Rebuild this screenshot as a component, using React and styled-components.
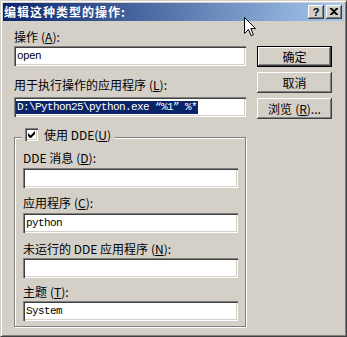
import React from "react";
import styled, { createGlobalStyle } from "styled-components";

const Global = createGlobalStyle`
  html, body { margin: 0; padding: 0; background: #d4d0c8; }
  * { box-sizing: border-box; }
`;

const CJK = `"Noto Sans CJK SC", "Noto Sans", sans-serif`;
const MONO = `"Liberation Mono", "Noto Sans CJK SC", monospace`;

const Window = styled.div`
  position: relative;
  width: 347px;
  height: 337px;
  background: #d4d0c8;
  border: 1px solid;
  border-color: #d4d0c8 #404040 #404040 #d4d0c8;
  box-shadow: inset 1px 1px 0 #ffffff, inset -1px -1px 0 #808080;
  padding: 2px;
  display: flex;
  flex-direction: column;
  overflow: hidden;
`;

const TitleBar = styled.div`
  height: 18px;
  display: flex;
  align-items: center;
  padding: 0 2px 0 1px;
  background: linear-gradient(to right, #0a246a, #a6caf0);
`;

const Title = styled.div`
  flex: 1;
  color: #ffffff;
  font: bold 12px/14px ${CJK};
  letter-spacing: 1px;
  white-space: nowrap;
`;

const CaptionButton = styled.div`
  width: 16px;
  height: 14px;
  margin-left: ${(p) => p.$ml || 0}px;
  background: #d4d0c8;
  box-shadow: inset -1px -1px 0 #404040, inset 1px 1px 0 #ffffff,
    inset -2px -2px 0 #808080, inset 2px 2px 0 #d4d0c8;
  display: flex;
  align-items: center;
  justify-content: center;
  font: bold 11px/14px "Liberation Sans", sans-serif;
  color: #000;
  padding-bottom: 1px;
`;

const Body = styled.div`
  display: flex;
  padding: 9px 0 0 11px;
`;

const LeftCol = styled.div`
  width: 234px;
  display: flex;
  flex-direction: column;
`;

const RightCol = styled.div`
  margin-left: 9px;
  padding-top: 16px;
  display: flex;
  flex-direction: column;
  gap: 5px;
`;

const Key = styled.span`
  padding-left: ${(p) => (p.$tight ? 0 : 3)}px;
  u { text-decoration: underline; text-underline-offset: 1px; }
`;

const Label = styled.div`
  font: 12px/13px ${CJK};
  color: #000;
  white-space: nowrap;
  margin-top: ${(p) => p.$mt || 0}px;
  margin-bottom: ${(p) => p.$mb || 3}px;
`;

const TextBox = styled.div`
  width: ${(p) => p.$w}px;
  height: 20px;
  background: #ffffff;
  box-shadow: inset 1px 1px 0 #808080, inset 2px 2px 0 #404040,
    inset -1px -1px 0 #ffffff, inset -2px -2px 0 #d4d0c8;
  padding: 0 2px;
  display: flex;
  align-items: center;
  font: 11px/13px ${MONO};
  letter-spacing: -0.6px;
  color: #000;
  white-space: pre;
  overflow: hidden;
`;

const Value = styled.span`
  padding: 0 1px;
  height: 13px;
  line-height: 13px;
  background: ${(p) => (p.$selected ? "#0a246a" : "transparent")};
  color: ${(p) => (p.$selected ? "#ffffff" : "#000000")};
`;

const Button = styled.div`
  width: 75px;
  height: 21px;
  background: #d4d0c8;
  display: flex;
  align-items: center;
  justify-content: center;
  font: 12px/13px ${CJK};
  color: #000;
  border: ${(p) => (p.$default ? "1px solid #000" : "none")};
  box-shadow: ${(p) =>
    p.$default
      ? "inset -1px -1px 0 #404040, inset 1px 1px 0 #ffffff, inset -2px -2px 0 #808080"
      : "inset -1px -1px 0 #404040, inset 1px 1px 0 #ffffff, inset -2px -2px 0 #808080, inset 2px 2px 0 #d4d0c8"};
`;

const GroupBox = styled.div`
  position: relative;
  margin-top: 20px;
  width: 232px;
  height: 190px;
  border: 1px solid #808080;
  box-shadow: inset 1px 1px 0 #ffffff, 1px 1px 0 #ffffff;
  padding: 13px 0 0 8px;
  display: flex;
  flex-direction: column;
`;

const Legend = styled.div`
  position: absolute;
  top: -10px;
  left: 7px;
  width: 93px;
  height: 13px;
  padding-left: 3px;
  background: #d4d0c8;
  display: flex;
  align-items: center;
  gap: 6px;
  font: 12px/13px ${CJK};
  color: #000;
  white-space: nowrap;
`;

const CheckBox = styled.div`
  width: 13px;
  height: 13px;
  flex: none;
  background: #ffffff;
  box-shadow: inset 1px 1px 0 #808080, inset 2px 2px 0 #404040,
    inset -1px -1px 0 #ffffff, inset -2px -2px 0 #d4d0c8;
  display: flex;
  align-items: center;
  justify-content: center;
`;

const Cursor = styled.svg`
  position: absolute;
  left: 243px;
  top: 16px;
`;

export default function App() {
  return (
    <>
      <Global />
      <Window>
        <TitleBar>
          <Title>编辑这种类型的操作:</Title>
          <CaptionButton>?</CaptionButton>
          <CaptionButton $ml={2}>
            <svg width="8" height="7" viewBox="0 0 8 7">
              <path d="M0 0h2l2 2 2-2h2v1L5 3.5 8 6v1H6L4 5 2 7H0V6l3-2.5L0 1z" fill="#000" />
            </svg>
          </CaptionButton>
        </TitleBar>
        <Body>
          <LeftCol>
            <Label>
              操作<Key>(<u>A</u>):</Key>
            </Label>
            <TextBox $w={232}>
              <Value>open</Value>
            </TextBox>
            <Label $mt={12} $mb={6}>
              用于执行操作的应用程序<Key>(<u>L</u>):</Key>
            </Label>
            <TextBox $w={232}>
              <Value $selected>D:\Python25\python.exe “%1” %*</Value>
            </TextBox>
            <GroupBox>
              <Legend>
                <CheckBox>
                  <svg width="7" height="7" viewBox="0 0 7 7">
                    <path d="M0 2v3l2 2h1l4-4V0L2.5 4.5z" fill="#000" />
                  </svg>
                </CheckBox>
                <span>
                  使用 DDE<Key $tight>(<u>U</u>)</Key>
                </span>
              </Legend>
              <Label $mb={4}>
                DDE 消息<Key>(<u>D</u>):</Key>
              </Label>
              <TextBox $w={215} />
              <Label $mt={8} $mb={4}>
                应用程序<Key>(<u>C</u>):</Key>
              </Label>
              <TextBox $w={215}>
                <Value>python</Value>
              </TextBox>
              <Label $mt={9} $mb={3}>
                未运行的 DDE 应用程序<Key>(<u>N</u>):</Key>
              </Label>
              <TextBox $w={215} />
              <Label $mt={7} $mb={3}>
                主题<Key>(<u>T</u>):</Key>
              </Label>
              <TextBox $w={215}>
                <Value>System</Value>
              </TextBox>
            </GroupBox>
          </LeftCol>
          <RightCol>
            <Button $default>确定</Button>
            <Button>取消</Button>
            <Button>
              浏览<Key>(<u>R</u>)...</Key>
            </Button>
          </RightCol>
        </Body>
        <Cursor width="12" height="20" viewBox="0 0 12 20">
          <path
            d="M0.5 0.5 V16.5 L4.5 12.5 L7.2 18.8 L9.4 17.8 L6.8 11.6 H11.5 Z"
            fill="#ffffff"
            stroke="#000000"
            strokeWidth="1"
          />
        </Cursor>
      </Window>
    </>
  );
}
